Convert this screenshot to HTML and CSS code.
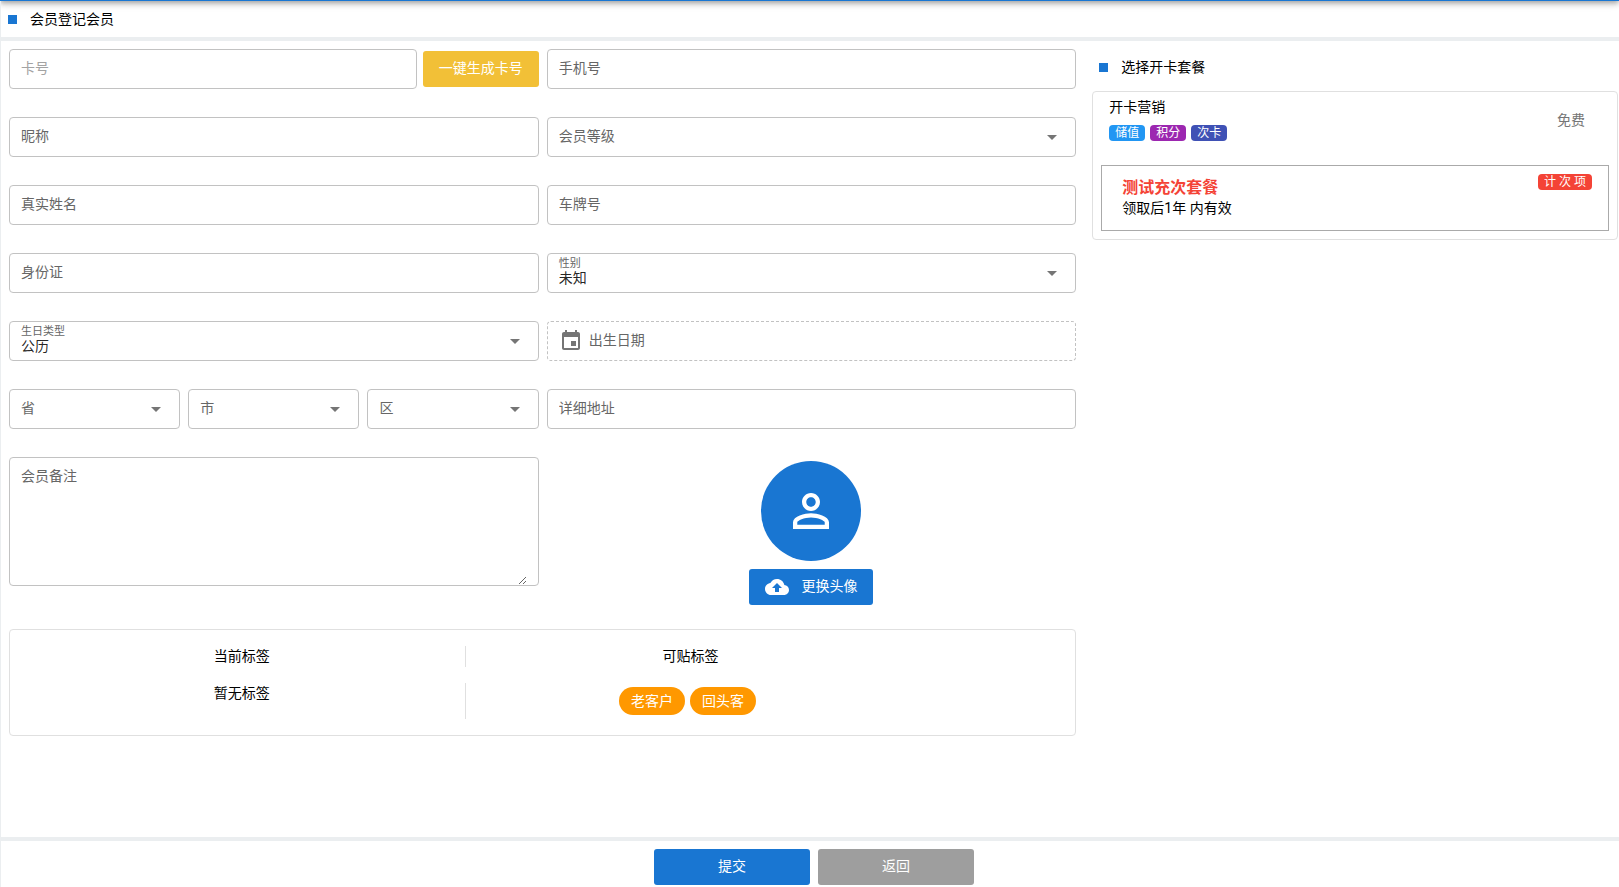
FILE: index.html
```html
<!DOCTYPE html>
<html lang="zh-CN">
<head>
<meta charset="utf-8">
<meta name="viewport" content="width=device-width, initial-scale=1">
<title>会员登记</title>
<link rel="stylesheet" href="styles.css">
</head>
<body>
<svg class="sprite" aria-hidden="true">
  <symbol id="arrow" viewBox="0 0 24 24"><path d="M7 10l5 5 5-5z"/></symbol>
  <symbol id="event" viewBox="0 0 24 24"><path d="M17 12h-5v5h5v-5zM16 1v2H8V1H6v2H5c-1.110 0-1.990.9-1.990 2L3 19c0 1.100.89 2 2 2h14c1.100 0 2-.9 2-2V5c0-1.100-.9-2-2-2h-1V1h-2zm3 18H5V8h14v11z"/></symbol>
  <symbol id="person" viewBox="0 0 24 24"><path d="M12 5.900c1.160 0 2.100.94 2.100 2.100s-.94 2.100-2.100 2.100S9.900 9.160 9.900 8s.94-2.100 2.100-2.100m0 9c2.970 0 6.100 1.460 6.100 2.100v1.100H5.900V17c0-.64 3.130-2.100 6.100-2.100M12 4C9.790 4 8 5.790 8 8s1.790 4 4 4 4-1.790 4-4-1.790-4-4-4zm0 9c-2.670 0-8 1.340-8 4v3h16v-3c0-2.660-5.330-4-8-4z"/></symbol>
  <symbol id="upload" viewBox="0 0 24 24"><path d="M19.350 10.040C18.670 6.590 15.640 4 12 4 9.110 4 6.600 5.640 5.350 8.040 2.340 8.360 0 10.910 0 14c0 3.310 2.690 6 6 6h13c2.760 0 5-2.240 5-5 0-2.640-2.050-4.780-4.650-4.960zM14 13v4h-4v-4H7l5-5 5 5h-3z"/></symbol>
</svg>

<div class="topbar"></div>
<div class="page">
  <header class="page-head">
    <h1 class="title">会员登记会员</h1>
  </header>

  <main class="content">
    <form class="form" id="member-form">
      <div class="card-row">
        <div class="field disabled"><input type="text" aria-label="卡号" placeholder="卡号" disabled></div>
        <button type="button" class="btn btn-yellow">一键生成卡号</button>
      </div>
      <div class="field"><input type="tel" aria-label="手机号" placeholder="手机号"></div>

      <div class="field"><input type="text" aria-label="昵称" placeholder="昵称"></div>
      <div class="field select empty">
        <select aria-label="会员等级"><option>会员等级</option></select>
        <svg class="icon"><use href="#arrow"/></svg>
      </div>

      <div class="field"><input type="text" aria-label="真实姓名" placeholder="真实姓名"></div>
      <div class="field"><input type="text" aria-label="车牌号" placeholder="车牌号"></div>

      <div class="field"><input type="text" aria-label="身份证" placeholder="身份证"></div>
      <div class="field select">
        <div class="labelled">
          <label for="gender">性别</label>
          <select id="gender"><option>未知</option></select>
        </div>
        <svg class="icon"><use href="#arrow"/></svg>
      </div>

      <div class="field select">
        <div class="labelled">
          <label for="calendar">生日类型</label>
          <select id="calendar"><option>公历</option></select>
        </div>
        <svg class="icon"><use href="#arrow"/></svg>
      </div>
      <div class="field date">
        <svg class="icon"><use href="#event"/></svg>
        <input type="text" aria-label="出生日期" placeholder="出生日期" readonly>
      </div>

      <div class="region">
        <div class="field select empty">
          <select aria-label="省"><option>省</option></select>
          <svg class="icon"><use href="#arrow"/></svg>
        </div>
        <div class="field select empty">
          <select aria-label="市"><option>市</option></select>
          <svg class="icon"><use href="#arrow"/></svg>
        </div>
        <div class="field select empty">
          <select aria-label="区"><option>区</option></select>
          <svg class="icon"><use href="#arrow"/></svg>
        </div>
      </div>
      <div class="field"><input type="text" aria-label="详细地址" placeholder="详细地址"></div>

      <div class="field memo"><textarea aria-label="会员备注" placeholder="会员备注"></textarea></div>
      <div class="avatar-box">
        <div class="avatar"><svg><use href="#person"/></svg></div>
        <button type="button" class="btn btn-blue btn-upload"><svg class="icon"><use href="#upload"/></svg><span>更换头像</span></button>
      </div>

      <section class="tags">
        <div class="tag-cell divided">当前标签</div>
        <div class="tag-cell">可贴标签</div>
        <div class="tag-cell divided first">暂无标签</div>
        <div class="tag-cell chips">
          <button type="button" class="chip">老客户</button>
          <button type="button" class="chip">回头客</button>
        </div>
      </section>
    </form>

    <aside class="side">
      <h2 class="title">选择开卡套餐</h2>
      <section class="package">
        <div class="package-head">
          <div>
            <div>开卡营销</div>
            <div class="badges">
              <span class="badge blue">储值</span>
              <span class="badge purple">积分</span>
              <span class="badge indigo">次卡</span>
            </div>
          </div>
          <span class="price">免费</span>
        </div>
        <div class="plan">
          <div class="plan-text">
            <h3 class="plan-name">测试充次套餐</h3>
            <div>领取后1年 内有效</div>
          </div>
          <span class="badge red">计 次 项</span>
        </div>
      </section>
    </aside>
  </main>

  <footer class="actions">
    <button type="submit" form="member-form" class="btn btn-blue">提交</button>
    <button type="button" class="btn btn-grey">返回</button>
  </footer>
</div>
</body>
</html>
```

FILE: styles.css
```css
* { box-sizing: border-box; }

body {
  margin: 0;
  min-height: 100vh;
  display: flex;
  flex-direction: column;
  background: #fff;
  color: #000;
  font-family: Roboto, "Noto Sans CJK SC", sans-serif;
  font-size: 14px;
  line-height: 21px;
}

h1, h2, h3 { margin: 0; font-weight: 400; }
button, input, select, textarea { font: inherit; }
.sprite { position: absolute; width: 0; height: 0; }

/* Toolbar tucked above the window, only its lower edge and shadow show */
.topbar {
  flex: none;
  height: 50px;
  margin-top: -49px;
  background: #1976d2;
  box-shadow: 0 2px 4px -1px rgba(0, 0, 0, .2), 0 4px 5px rgba(0, 0, 0, .14), 0 1px 10px rgba(0, 0, 0, .12);
}

.page {
  flex: 1;
  display: flex;
  flex-direction: column;
  border-left: 1px solid #ebeef0;
}

.page-head {
  padding-left: 7px;
  border-bottom: 4px solid #ebeef0;
}

.title {
  display: flex;
  align-items: center;
  gap: 13px;
  height: 36px;
  font-size: 14px;
}
.title::before {
  content: "";
  width: 9px;
  height: 9px;
  background: #1976d2;
}

.content {
  flex: 1;
  display: grid;
  grid-template-columns: minmax(0, 67fr) minmax(0, 33fr);
  align-items: start;
  gap: 16px;
  padding: 8px 1px 8px 8px;
}

.form {
  display: grid;
  grid-template-columns: repeat(2, minmax(0, 1fr));
  align-items: start;
  gap: 28px 8px;
}

.field {
  display: flex;
  align-items: center;
  height: 40px;
  padding: 0 11px;
  border: 1px solid #c2c2c2;
  border-radius: 4px;
  color: rgba(0, 0, 0, .87);
}
.field input, .field select, .field textarea {
  flex: 1;
  width: 100%;
  min-width: 0;
  padding: 0 0 2px;
  border: 0;
  outline: 0;
  background: none;
  color: inherit;
  appearance: none;
}
.field input { height: 36px; }
.field ::placeholder { color: #666; opacity: 1; }
.disabled ::placeholder { color: #a3a3a3; }
.empty select { color: #666; }

.icon {
  flex: none;
  width: 24px;
  height: 24px;
  fill: currentColor;
}
.field .icon { color: #757575; }

.labelled {
  flex: 1;
  min-width: 0;
  display: flex;
  flex-direction: column;
}
.labelled label {
  color: #666;
  font-size: 11px;
  line-height: 12px;
}
.labelled select { line-height: 16px; }

.date { gap: 6px; border-style: dashed; }

.card-row {
  display: flex;
  align-items: center;
  gap: 6px;
}
.card-row .field { flex: 1; }

.region {
  display: grid;
  grid-template-columns: repeat(3, minmax(0, 1fr));
  gap: 8px;
}

.memo { height: auto; }
.field textarea {
  height: 127px;
  padding-top: 8px;
  resize: vertical;
}

.btn {
  display: inline-flex;
  align-items: center;
  justify-content: center;
  height: 36px;
  padding: 0 16px 2px;
  border: 0;
  border-radius: 3px;
  color: #fff;
}
.btn-yellow { background: #f2c037; }
.btn-blue { background: #1976d2; }
.btn-grey { background: #9e9e9e; }
.btn-upload { gap: 12px; padding: 0 16px; }
.btn-upload span { padding-bottom: 2px; }

.avatar-box {
  display: flex;
  flex-direction: column;
  align-items: center;
  gap: 8px;
  padding-top: 4px;
}
.avatar {
  display: flex;
  align-items: center;
  justify-content: center;
  width: 100px;
  height: 100px;
  border-radius: 50%;
  background: #1976d2;
}
.avatar svg { width: 54px; height: 54px; fill: #fff; }

.tags {
  grid-column: 1 / -1;
  display: grid;
  grid-template-columns: 53fr 53fr 19fr;
  row-gap: 16px;
  margin-top: -4px;
  padding: 16px 0 16px 8px;
  border: 1px solid #e0e0e0;
  border-radius: 4px;
  text-align: center;
}
.divided { border-right: 1px solid #e0e0e0; }
.first { grid-column: 1; }

.chips {
  display: flex;
  justify-content: center;
  gap: 5px;
  padding: 4px 6px 4px 0;
}
.chip {
  height: 28px;
  padding: 0 12px;
  border: 0;
  border-radius: 14px;
  background: #ff9800;
  color: #fff;
}

.side .title { padding-left: 7px; }
.package {
  margin-top: 6px;
  border: 1px solid #e0e0e0;
  border-radius: 4px;
}
.package-head {
  display: flex;
  align-items: center;
  justify-content: space-between;
  padding: 5px 32px 24px 16px;
}
.badges { display: flex; gap: 5px; margin-top: 7px; }
.badge {
  padding: 0 6px;
  border-radius: 4px;
  color: #fff;
  font-size: 12px;
  line-height: 16px;
}
.blue { background: #2196f3; }
.purple { background: #9c27b0; }
.indigo { background: #3f51b5; }
.red { background: #f44336; }
.price { padding-top: 2px; color: #757575; }

.plan {
  display: flex;
  align-items: flex-start;
  justify-content: space-between;
  margin: 0 8px 8px;
  padding: 8px 16px 11px 20px;
  border: 1px solid #aaa;
}
.plan-text { padding-top: 3px; }
.plan-name {
  color: #f44336;
  font-size: 16px;
  font-weight: 700;
  line-height: 21px;
}

.actions {
  display: flex;
  justify-content: center;
  gap: 8px;
  padding: 8px 0 2px 8px;
  border-top: 4px solid #ebeef0;
}
.actions .btn { width: 156px; }
```
